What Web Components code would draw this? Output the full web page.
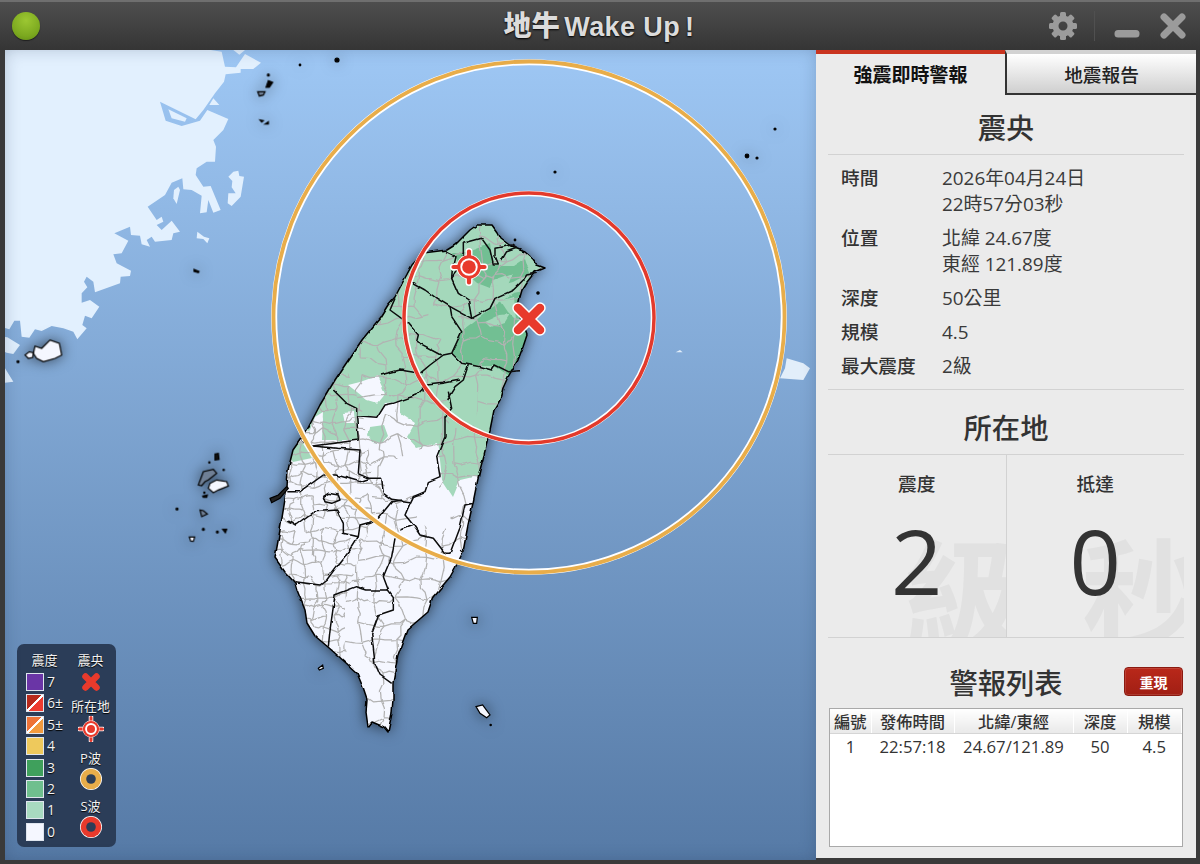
<!DOCTYPE html>
<html lang="zh-Hant">
<head>
<meta charset="utf-8">
<title>地牛 Wake Up!</title>
<style>
  html, body { margin: 0; padding: 0; background: #333; }
  body { font-family: "Open Sans", "Noto Sans CJK TC", sans-serif; }
</style>
</head>
<body>
<eew-app></eew-app>

<script>
const FONT = `"Open Sans", "Noto Sans CJK TC", sans-serif`;

class EewTitlebar extends HTMLElement {
  connectedCallback() {
    const teeth = [0, 45, 90, 135, 180, 225, 270, 315]
      .map(a => `<rect x="-3" y="-14" width="6" height="7" rx="1.500" transform="rotate(${a})"/>`).join('');
    this.attachShadow({ mode: 'open' }).innerHTML = `
    <style>
      :host {
        display: grid; grid-template-columns: 1fr auto 1fr; align-items: center; box-sizing: border-box;
        height: 50px; flex: none; padding: 0 14px 0 12px;
        background: linear-gradient(#4e4e4e, #353535);
        border-top: 2px solid #6f6f6f;
      }
      .ball {
        width: 28px; height: 28px; border-radius: 50%;
        background: radial-gradient(circle at 50% 30%, #9cc732, #7ba81f 65%, #5f8a12);
        box-shadow: 0 1px 1px rgba(0,0,0,.5);
      }
      .title {
        color: #dcdcdc; font: 700 27px "Liberation Sans", "Noto Sans CJK TC", sans-serif;
        letter-spacing: .4px; text-shadow: 0 1px 2px #000; white-space: nowrap; padding-bottom: 4px;
      }
      .title b { font-size: 28px; margin-right: 4px; }
      .title i { font-style: normal; margin-left: 5px; }
      .tools { display: flex; align-items: center; justify-content: flex-end; }
      .sep { width: 1px; height: 30px; background: #505050; margin: 0 19px 0 17px; }
      svg { display: block; }
    </style>
    <div class="ball"></div>
    <div class="title"><b>地牛</b>Wake Up<i>!</i></div>
    <div class="tools">
      <svg width="28" height="28" viewBox="-14 -14 28 28" style="margin-left:1px">
        <g fill="#9b9b9b">${teeth}</g>
        <circle r="7.500" fill="none" stroke="#9b9b9b" stroke-width="6"/>
      </svg>
      <div class="sep"></div>
      <svg width="26" height="10" viewBox="0 0 26 10" style="margin:16px 20px 0 0"><rect x="0.500" y="1" width="25" height="7.500" rx="3.500" fill="#9b9b9b"/></svg>
      <svg width="26" height="26" viewBox="0 0 26 26"><path d="M4 4 22 22M22 4 4 22" stroke="#9b9b9b" stroke-width="7" stroke-linecap="round"/></svg>
    </div>`;
  }
}

// small seeded generator so the township lines stay the same on every load
function meshPath(x0, y0, x1, y1, cell, seed) {
  let s = seed;
  const rnd = () => { s = (s * 16807) % 2147483647; return s / 2147483647; };
  const nx = Math.ceil((x1 - x0) / cell), ny = Math.ceil((y1 - y0) / cell);
  const pts = [];
  for (let j = 0; j <= ny; j++) {
    pts[j] = [];
    for (let i = 0; i <= nx; i++) {
      pts[j][i] = [x0 + i * cell + (rnd() - .5) * cell * .7, y0 + j * cell + (rnd() - .5) * cell * .7];
    }
  }
  const seg = (a, b) => {
    const k = .22 * cell;
    const m1 = [a[0] + (b[0] - a[0]) * .35 + (rnd() - .5) * k, a[1] + (b[1] - a[1]) * .35 + (rnd() - .5) * k];
    const m2 = [a[0] + (b[0] - a[0]) * .7 + (rnd() - .5) * k, a[1] + (b[1] - a[1]) * .7 + (rnd() - .5) * k];
    const f = p => p[0].toFixed(1) + ' ' + p[1].toFixed(1);
    return `M${f(a)}L${f(m1)}L${f(m2)}L${f(b)}`;
  };
  let d = '';
  for (let j = 0; j <= ny; j++) {
    for (let i = 0; i <= nx; i++) {
      if (i < nx && rnd() > .14) d += seg(pts[j][i], pts[j][i + 1]);
      if (j < ny && rnd() > .14) d += seg(pts[j][i], pts[j + 1][i]);
    }
  }
  return d;
}

const TAIWAN = `463,237 470,230 477,225 492,225 497,232 500,238 512,247 525,252 532,258 537,265 545,268 535,272 527,282 522,290 520,297 517,310 522,322 527,335 523,347 518,360 512,370 508,377 503,388 500,400 494,410 490,430 484,455 480,470 476,488 473,503 468,525 463,552 455,568 450,577 433,597 428,612 407,630 398,655 393,683 393,700 392,713 388,732 384,727 372,722 368,727 366,712 367,700 362,685 357,673 345,662 328,647 315,636 307,623 305,610 297,590 295,583 285,572 275,558 280,530 287,487 288,470 293,450 300,440 307,430 320,405 335,380 345,365 362,340 380,318 388,305 395,297 405,278 412,265 423,253 447,250 455,245`;

class EewMap extends HTMLElement {
  connectedCallback() {
    const dense = meshPath(270, 365, 400, 680, 11, 4711);
    const sparse = meshPath(340, 220, 560, 740, 20, 90210);
    this.attachShadow({ mode: 'open' }).innerHTML = `
    <style>
      :host {
        display: block; position: relative; flex: none; width: 811px;
        background: linear-gradient(#9ec7f4, #567aa6);
        overflow: hidden;
      }
      :host::after {
        content: ""; position: absolute; inset: 0; pointer-events: none;
        box-shadow: inset 0 0 20px -6px rgba(20,40,70,.4);
      }
      svg { display: block; }
      .land { filter: drop-shadow(0 0 7px rgba(0,0,0,.6)); }
      .county { fill: none; stroke: #0a0a0a; stroke-width: 1.500; stroke-linejoin: round; }
      .county polyline { vector-effect: non-scaling-stroke; }
      .isl polygon, .isl circle { stroke: #000; stroke-width: 1.200; vector-effect: non-scaling-stroke; }
    </style>
    <svg width="811" height="810" viewBox="5 50 811 810">
      <defs>
        <clipPath id="tw"><polygon points="${TAIWAN}"/></clipPath>
        <clipPath id="plain"><polygon points="270,365 345,365 362,410 372,470 372,520 345,600 345,640 350,680 270,680"/></clipPath>
        <clipPath id="hills"><polygon points="345,215 570,215 570,740 350,740 345,640 345,600 372,520 372,470 362,410 345,365"/></clipPath>
        <filter id="wig" x="-5%" y="-5%" width="110%" height="110%">
          <feTurbulence type="fractalNoise" baseFrequency=".075" numOctaves="2" seed="7"/>
          <feDisplacementMap in="SourceGraphic" scale="3.500" xChannelSelector="R" yChannelSelector="G"/>
        </filter>
      </defs>

      <!-- mainland coast, points read at 3x -->
      <g transform="translate(0 50) scale(.33333)" fill="#e2f0fe">
        <polygon points="0,0 632,0 665,5 675,50 708,52 735,12 783,38 760,57 722,57 722,68 677,73 672,95 645,130 610,180 587,208 480,155 497,212 545,228 600,212 622,180 685,207 670,240 640,270 648,290 645,335 620,335 590,355 587,375 610,410 632,408 662,480 640,488 625,450 620,487 600,490 605,437 575,420 550,418 547,385 515,398 495,435 443,470 470,510 485,500 490,515 470,525 485,540 515,512 540,545 520,550 515,570 465,575 455,560 440,570 450,590 425,583 420,557 393,555 390,530 343,550 385,572 365,610 340,613 350,640 393,662 390,678 362,680 360,700 285,727 280,695 260,680 252,695 262,712 245,730 245,758 270,750 298,770 275,805 255,797 247,825 260,835 232,868 220,845 190,835 155,828 125,843 105,838 88,863 65,860 60,812 43,812 28,838 0,830"/>
        <polygon points="700,0 735,0 718,14"/>
        <polygon points="505,178 560,205 555,215 515,205"/>
        <polygon points="628,165 640,145 658,165"/>
        <polygon points="522,420 535,410 540,420 530,462 520,445"/>
        <polygon points="685,380 700,365 715,362 718,378 732,380 722,440 695,468 683,460 685,430 707,430 695,412 697,393"/>
        <polygon points="590,565 592,545 612,560 628,565 622,580 610,567"/>
        <polygon points="0,858 22,862 60,885 40,912 20,908 0,900"/>
        <polygon points="0,958 15,955 40,995 15,998 0,1000"/>
      </g>
      <g transform="translate(660 110) scale(.33333)" fill="#e2eefa">
        <polygon points="380,745 430,760 450,775 430,810 360,805 375,775"/>
        <polygon points="47,727 60,720 68,727"/>
      </g>

      <g class="land">
        <g filter="url(#wig)">
          <polygon points="${TAIWAN}" fill="#f5f7ff"/>

          <g clip-path="url(#tw)">
            <!-- intensity 1 -->
            <g fill="#a4d8bb">
              <polygon points="290,200 600,200 600,478 473,477 460,480 453,497 442,480 440,460 437,443 417,448 407,437 415,423 400,413 400,402 385,403 377,417 357,417 358,440 322,440 323,417 317,433 307,430 280,440"/>
              <polygon points="285,452 302,442 312,458 293,462"/>
              <polygon points="370,427 384,425 388,436 382,443 372,442 368,435"/>
            </g>
            <g fill="#f5f7ff">
              <polygon points="348,385 360,382 377,376 385,393 377,403 367,400 357,392"/>
              <polygon points="343,413 353,412 354,423 345,423"/>
              <polygon points="315,417 323,412 322,432 310,432"/>
            </g>
            <!-- intensity 2 -->
            <g fill="#72bf93">
              <polygon points="452,353 463,330 493,307 513,293 530,290 530,345 517,367 508,375 493,365 467,365"/>
              <polygon points="452,253 463,253 490,243 493,266 513,266 525,258 530,273 513,282 490,288 477,283 460,267"/>
            </g>
            <g fill="#a4d8bb">
              <polygon points="485,322 500,315 510,314 505,322 490,327"/>
              <polygon points="493,280 513,273 508,285 490,288"/>
              <polygon points="500,300 514,296 516,320 508,312"/>
            </g>

            <!-- township lines -->
            <g fill="none" stroke="#b2b2b2" stroke-width="1.250" stroke-linejoin="round">
              <path d="${dense}" clip-path="url(#plain)"/>
              <path d="${sparse}" clip-path="url(#hills)"/>
            </g>
            <!-- the big mountain townships have no inner lines -->
            <g fill="#f5f7ff">
              <polygon points="384,465 412,452 437,445 440,477 413,493 385,490"/>
              <polygon points="418,497 442,486 452,500 450,525 437,538 418,520"/>
            </g>
            <g fill="#a4d8bb">
              <polygon points="445,395 478,392 476,425 450,430"/>
              <polygon points="430,305 462,312 445,340 425,335"/>
            </g>
          </g>

          <polygon points="${TAIWAN}" fill="none" stroke="#000" stroke-width="1.500" stroke-linejoin="round"/>

          <!-- county lines, read from the 3x crops -->
          <g class="county" transform="translate(380 210) scale(.33333)">
            <polyline points="90,215 135,240 170,265 210,290 215,320 245,365 215,430 190,435 150,465 120,490 60,480 0,495"/>
            <polyline points="45,265 30,300 85,340 115,375 110,395 185,435"/>
            <polyline points="195,125 225,140 218,170 215,205 235,250 265,270 275,325 210,290"/>
            <polyline points="275,325 330,295 345,265 400,240 430,210 440,195 470,190"/>
            <polyline points="215,205 240,170 250,130 250,100 305,85 330,120 340,165 355,165 345,140 345,115 395,105 410,115 380,125 365,150"/>
            <polyline points="215,430 245,460 300,470 335,480 345,465 385,485 420,482"/>
            <polyline points="265,465 250,510 225,530 200,570"/>
            <polyline points="120,490 130,545"/>
          </g>
          <g class="county" transform="translate(260 380) scale(.33333)">
            <polyline points="220,30 260,70 290,85 290,110 350,115 375,75 400,70 470,45 500,15 550,10 600,0"/>
            <polyline points="565,35 575,85 555,110 555,170 530,230 540,290 505,305 495,335 460,350 450,370 435,405 460,435 480,465 520,475 555,520 570,520 600,440 615,375 640,370"/>
            <polyline points="290,110 295,180 160,198 125,185"/>
            <polyline points="160,198 230,205 300,210 295,280 330,295 365,295 370,340 395,358 450,365"/>
            <polyline points="190,285 230,285 300,305 330,295"/>
            <polyline points="190,285 120,335 85,335"/>
            <polyline points="85,420 110,435 165,395 230,390 250,430 250,460 295,470 300,435 335,425 355,415 395,365 430,360"/>
            <polyline points="295,470 270,510 230,560 200,600 180,615 105,605"/>
            <polyline points="420,450 460,435"/>
            <polyline points="405,475 395,530 370,590 385,630 400,650 400,690 355,705 335,760 345,850 360,885 395,910"/>
            <polyline points="385,630 320,630 290,620 225,645 210,750 205,800"/>
            <polyline points="190,350 205,340 235,345 240,360 215,370 195,365 190,350"/>
            <polyline points="600,515 615,512"/>
          </g>
        </g>

        <!-- islands -->
        <g class="isl" fill="#f5f7ff" transform="translate(260 380) scale(.33333)">
          <polygon points="635,712 652,712 650,730 640,730"/>
          <polygon points="648,980 668,975 690,1005 680,1013 660,1000"/>
          <polygon points="175,865 188,855 190,865 178,870"/>
          <polygon points="30,355 55,345 80,320 85,325 60,355 35,368" fill="#222"/>
          <circle cx="692" cy="1035" r="2" fill="#000"/>
        </g>
        <g class="isl" fill="#111" transform="translate(150 440) scale(.33333)">
          <polygon points="195,42 205,40 207,58 195,60"/>
          <polygon points="145,135 160,95 190,88 200,100 175,120 165,125 155,137" fill="#6f7f95"/>
          <polygon points="180,130 200,120 230,125 235,138 205,150 190,158 175,145" fill="#f5f7ff"/>
          <polygon points="158,168 172,165 170,172 160,172"/>
          <polygon points="150,210 160,212 172,222 155,230" fill="#6f7f95"/>
          <polygon points="118,291 134,291 130,304 122,303" fill="#f5f7ff"/>
          <polygon points="218,268 230,268 226,278"/>
          <circle cx="178" cy="67" r="2"/><circle cx="221" cy="90" r="2"/>
          <circle cx="81" cy="207" r="3"/><circle cx="160" cy="268" r="3"/><circle cx="202" cy="276" r="3"/>
          <circle cx="163" cy="158" r="2"/>
        </g>
        <g class="isl" fill="#f5f7ff" transform="translate(0 50) scale(.33333)">
          <polygon points="100,910 105,888 125,895 150,870 178,880 185,915 165,925 130,935 110,925"/>
          <polygon points="75,915 88,905 100,908 98,922 85,925"/>
          <circle cx="54" cy="935" r="3" fill="#000"/>
          <circle cx="805" cy="75" r="3" fill="#000"/>
          <polygon points="798,112 805,92 818,97 808,112" fill="#000"/>
          <polygon points="773,125 795,125 790,135 778,138" fill="#6f7f95"/>
          <polygon points="780,210 790,212 785,216" fill="#000"/>
          <polygon points="795,222 805,215 805,222" fill="#000"/>
          <polygon points="582,658 597,664 595,668 582,664" fill="#000"/>
        </g>
        <g class="isl" fill="#000">
          <circle cx="337" cy="60" r="2"/><circle cx="300" cy="65" r=".8"/>
          <circle cx="555" cy="172" r="1"/>
          <circle cx="775" cy="129" r="1"/><circle cx="747" cy="156" r="1.800"/><circle cx="757" cy="158" r="1"/>
          <circle cx="515" cy="240" r=".8"/><circle cx="538" cy="293" r="1.200"/>
        </g>
      </g>

      <!-- wave fronts -->
      <circle cx="529" cy="317" r="254.800" fill="none" stroke="#fff" stroke-width="6"/>
      <circle cx="529" cy="317" r="255.500" fill="none" stroke="#e8ad4a" stroke-width="3.800"/>
      <circle cx="529" cy="318" r="124.500" fill="none" stroke="#fff" stroke-width="5.500"/>
      <circle cx="529" cy="318" r="125" fill="none" stroke="#e33a2c" stroke-width="3.500"/>

      <g transform="translate(469 267)">
        <path d="M0-15.500V15.500M-15.500 0H15.500" stroke="#fff" stroke-width="7" stroke-linecap="round"/>
        <circle r="12.500" fill="#fff"/>
        <path d="M0-15.500V15.500M-15.500 0H15.500" stroke="#e83a2c" stroke-width="4.200" stroke-linecap="round"/>
        <circle r="10.200" fill="#fff" stroke="#e83a2c" stroke-width="3"/>
        <circle r="6.800" fill="#e83a2c"/>
      </g>
      <g transform="translate(529 319)">
        <path d="M-11-11 11 11M11-11-11 11" stroke="#fff" stroke-width="11.500" stroke-linecap="round"/>
        <path d="M-11-11 11 11M11-11-11 11" stroke="#e83a2c" stroke-width="8.500" stroke-linecap="round"/>
      </g>
    </svg>
    <eew-legend></eew-legend>`;
  }
}

class EewLegend extends HTMLElement {
  connectedCallback() {
    const sw = (bg, label) => `<div class="row"><span class="sw" style="background:${bg}"></span><span class="num">${label}</span></div>`;
    const split = (a, b) => `linear-gradient(to bottom right, ${a} 0 46%, #fff 46% 54%, ${b} 54%)`;
    const ring = c => `<svg width="24" height="24" viewBox="-12 -12 24 24">
      <circle r="11" fill="#fff"/><circle r="10.300" fill="${c}"/><circle r="4.800" fill="#2b3d58"/></svg>`;
    this.attachShadow({ mode: 'open' }).innerHTML = `
    <style>
      :host {
        position: absolute; left: 12px; bottom: 13px; width: 99px; height: 203px;
        box-sizing: border-box; display: flex; padding: 8px 0 0 9px;
        background: #2b3d58; border-radius: 7px; color: #f2f2f2;
        font: 13px ${FONT}; text-shadow: 0 1px 1px #000;
      }
      .left { width: 40px; }
      .head { text-align: center; line-height: 17px; height: 21px; margin-left: -3px; }
      .row { display: flex; align-items: center; height: 18px; margin-bottom: 3.400px; }
      .sw { width: 16px; height: 16px; border: 1px solid #dfe5ee; flex: none; margin-right: 3px; }
      .num { font-size: 14px; line-height: 18px; }
      .right { width: 49px; display: flex; flex-direction: column; align-items: center; }
      .right span { line-height: 17px; white-space: nowrap; }
      svg { display: block; flex: none; }
    </style>
    <div class="left">
      <div class="head">震度</div>
      ${sw('#6a35a6', '7')}
      ${sw(split('#b72a1c', '#ee3b2f'), '6±')}
      ${sw(split('#ee7338', '#f19b3f'), '5±')}
      ${sw('#eec95c', '4')}
      ${sw('#3fa05c', '3')}
      ${sw('#6fbf8e', '2')}
      ${sw('#a8dac0', '1')}
      ${sw('#f5f7ff', '0')}
    </div>
    <div class="right">
      <span>震央</span>
      <svg width="20" height="20" viewBox="-10 -10 20 20" style="margin-top:3px"><path d="M-5.500-5.500 5.500 5.500M5.500-5.500-5.500 5.500" stroke="#e83a2c" stroke-width="6.500" stroke-linecap="round"/></svg>
      <span style="margin-top:6px">所在地</span>
      <svg width="26" height="26" viewBox="-13 -13 26 26" style="margin-top:1px">
        <path d="M0-12V12M-12 0H12" stroke="#fff" stroke-width="4.500" stroke-linecap="round"/>
        <path d="M0-11.500V11.500M-11.500 0H11.500" stroke="#e83a2c" stroke-width="3" stroke-linecap="round"/>
        <circle r="8.500" fill="#fff"/><circle r="7" fill="none" stroke="#e83a2c" stroke-width="2.200"/><circle r="4" fill="#e83a2c"/>
      </svg>
      <span style="margin-top:8px">P波</span>
      ${ring('#e8ad4a')}
      <span style="margin-top:7px">S波</span>
      ${ring('#e83a2c')}
    </div>`;
  }
}

class EewTabs extends HTMLElement {
  connectedCallback() {
    this.attachShadow({ mode: 'open' }).innerHTML = `
    <style>
      :host { display: flex; flex: none; height: 45px; font: 500 18.700px ${FONT}; }
      div { display: flex; align-items: center; justify-content: center; box-sizing: border-box; }
      .on { width: 189px; border-top: 4px solid #c9341f; background: #ebebeb; color: #111; font-weight: 700; font-size: 19px; padding-bottom: 1px; }
      .off {
        flex: 1; border-top: 4px solid #d2d2d2; border-left: 2px solid #333; border-bottom: 2px solid #333;
        background: linear-gradient(#fff, #cfcfcf); color: #222;
      }
    </style>
    <div class="on">強震即時警報</div>
    <div class="off">地震報告</div>`;
  }
}

class EewHeading extends HTMLElement {
  connectedCallback() {
    this.attachShadow({ mode: 'open' }).innerHTML = `
    <style>
      :host {
        display: block; flex: none; margin: 0 12px; text-align: center; box-sizing: border-box;
        font: 500 28.300px/38px ${FONT}; color: #333;
      }
    </style>
    <slot></slot>`;
  }
}

class EewRow extends HTMLElement {
  connectedCallback() {
    this.attachShadow({ mode: 'open' }).innerHTML = `
    <style>
      :host { display: flex; font-size: 18.900px; line-height: 26px; color: #3a3a3a; }
      .k { width: 101px; flex: none; font-size: 18.700px; font-weight: 500; color: #333; white-space: nowrap; }
    </style>
    <div class="k">${this.getAttribute('label')}</div>
    <div><slot></slot></div>`;
  }
}

class EewStat extends HTMLElement {
  connectedCallback() {
    this.attachShadow({ mode: 'open' }).innerHTML = `
    <style>
      :host {
        display: block; position: relative; overflow: hidden; flex: 1;
        text-align: center; color: #333;
      }
      .label { font: 500 18.700px/26px ${FONT}; padding-top: 16px; position: relative; }
      .val { font: 400 90px/122px "Open Sans", sans-serif; position: relative; margin-top: 2px; }
      .mark {
        position: absolute; right: 0; bottom: -24px; width: 102px; overflow: hidden; white-space: nowrap;
        font: 700 120px/144px "Noto Sans CJK TC", sans-serif; color: #e1e1e1; text-align: left;
      }
    </style>
    <div class="mark">${this.getAttribute('unit')}</div>
    <div class="label">${this.getAttribute('label')}</div>
    <div class="val">${this.getAttribute('value')}</div>`;
  }
}

class EewTable extends HTMLElement {
  connectedCallback() {
    this.attachShadow({ mode: 'open' }).innerHTML = `
    <style>
      :host {
        display: block; flex: none; margin: 0 13px; height: 139px; box-sizing: border-box;
        background: #fff; border: 1px solid #a9a9a9; font-size: 16.700px; color: #333;
      }
      table { border-collapse: collapse; table-layout: fixed; width: 100%; }
      th {
        height: 23px; padding: 0; font-size: 16.300px; font-weight: 500; background: linear-gradient(#fff, #e9e9e9);
        border-right: 1px solid #fff; border-left: 1px solid #d5d5d5; border-bottom: 1px solid #d5d5d5;
        white-space: nowrap;
      }
      th:first-child { border-left: 0; }
      td { height: 24px; padding: 0; text-align: center; font-weight: 400; white-space: nowrap; }
    </style>
    <table>
      <colgroup><col style="width:41px"><col style="width:83px"><col style="width:119px"><col style="width:54px"><col></colgroup>
      <tr><th>編號</th><th>發佈時間</th><th>北緯/東經</th><th>深度</th><th>規模</th></tr>
      <tr><td>1</td><td>22:57:18</td><td>24.67/121.89</td><td>50</td><td>4.5</td></tr>
    </table>`;
  }
}

class EewPanel extends HTMLElement {
  connectedCallback() {
    this.attachShadow({ mode: 'open' }).innerHTML = `
    <style>
      :host {
        display: flex; flex-direction: column; flex: none; width: 380px; height: 808px;
        background: #ebebeb; font-family: ${FONT};
      }
      .rule { flex: none; height: 1px; margin: 0 12px; background: #d2d2d2; }
      .rows { flex: none; box-sizing: border-box; height: 234px; padding: 10px 0 0 25px; display: flex; flex-direction: column; gap: 8px; }
      .stats { flex: none; display: flex; height: 182px; margin: 0 12px; }
      .vline { width: 1px; flex: none; background: #d2d2d2; }
      .list { position: relative; flex: none; height: 70px; display: flex; align-items: flex-end; justify-content: center; }
      .list eew-heading { padding-bottom: 6px; }
      .btn {
        position: absolute; right: 13px; top: 29px; width: 59px; height: 29px; box-sizing: border-box;
        display: flex; align-items: center; justify-content: center;
        background: linear-gradient(#b9281a, #a11f14); border: 1px solid #8b1a10; border-radius: 4px;
        color: #fff; font: 700 14px ${FONT}; box-shadow: inset 0 0 0 1px rgba(255,255,255,.12);
      }
    </style>
    <eew-tabs></eew-tabs>
    <eew-heading style="padding-top:14px;height:59px">震央</eew-heading>
    <div class="rule"></div>
    <div class="rows">
      <eew-row label="時間">2026年04月24日<br>22時57分03秒</eew-row>
      <eew-row label="位置">北緯 24.67度<br>東經 121.89度</eew-row>
      <eew-row label="深度">50公里</eew-row>
      <eew-row label="規模">4.5</eew-row>
      <eew-row label="最大震度">2級</eew-row>
    </div>
    <div class="rule"></div>
    <eew-heading style="padding-top:19px;height:64px">所在地</eew-heading>
    <div class="rule"></div>
    <div class="stats">
      <eew-stat label="震度" value="2" unit="級"></eew-stat>
      <div class="vline"></div>
      <eew-stat label="抵達" value="0" unit="秒"></eew-stat>
    </div>
    <div class="rule"></div>
    <div class="list">
      <eew-heading>警報列表</eew-heading>
      <div class="btn">重現</div>
    </div>
    <eew-table></eew-table>`;
  }
}

class EewApp extends HTMLElement {
  connectedCallback() {
    this.attachShadow({ mode: 'open' }).innerHTML = `
    <style>
      :host {
        display: flex; flex-direction: column; width: 1200px; height: 864px; overflow: hidden;
        background: #3a3a3a; box-sizing: border-box; font-family: ${FONT};
      }
      .main { display: flex; flex: 1; padding-left: 5px; min-height: 0; }
      eew-map { height: 810px; }
    </style>
    <eew-titlebar></eew-titlebar>
    <div class="main">
      <eew-map></eew-map>
      <eew-panel></eew-panel>
    </div>`;
  }
}

customElements.define('eew-titlebar', EewTitlebar);
customElements.define('eew-legend', EewLegend);
customElements.define('eew-map', EewMap);
customElements.define('eew-tabs', EewTabs);
customElements.define('eew-heading', EewHeading);
customElements.define('eew-row', EewRow);
customElements.define('eew-stat', EewStat);
customElements.define('eew-table', EewTable);
customElements.define('eew-panel', EewPanel);
customElements.define('eew-app', EewApp);
</script>
</body>
</html>
